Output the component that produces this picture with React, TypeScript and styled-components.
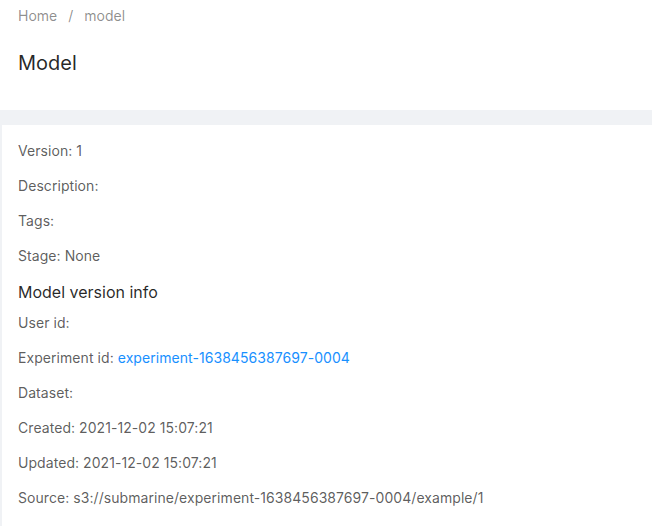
import React from 'react';
import styled, { createGlobalStyle } from 'styled-components';

const GlobalStyle = createGlobalStyle`
  body {
    margin: 0;
    font-family: Inter, "Noto Sans", sans-serif;
    font-size: 14px;
    background: #f0f2f5;
  }
`;

const Page = styled.div`
  display: flex;
  flex-direction: column;
  min-height: 526px;
`;

const Header = styled.div`
  background: #fff;
  padding: 5px 18px 0;
  height: 105px;
`;

const Breadcrumb = styled.div`
  display: flex;
  gap: 8px;
  line-height: 22px;
  color: rgba(0, 0, 0, 0.45);
`;

const Separator = styled.span`
  margin: 0 3px;
`;

const Title = styled.h1`
  margin: 22px 0 0;
  font-size: 20px;
  font-weight: 400;
  line-height: 28px;
  color: rgba(0, 0, 0, 0.85);
`;

const Content = styled.div`
  flex: 1;
  margin: 15px 0 0 2px;
  padding: 15px 16px 0;
  background: #fff;
`;

const Line = styled.p`
  margin: 0 0 14px;
  line-height: 21px;
  letter-spacing: 0.06px;
  color: rgba(0, 0, 0, 0.65);
`;

const Section = styled.h3`
  margin: 0 0 8px;
  font-size: 16px;
  font-weight: 400;
  line-height: 24px;
  color: rgba(0, 0, 0, 0.85);
`;

const Link = styled.a`
  color: #1890ff;
  text-decoration: none;
`;

export default function App() {
  return (
    <Page>
      <GlobalStyle />
      <Header>
        <Breadcrumb>
          <span>Home</span>
          <Separator>/</Separator>
          <span>model</span>
        </Breadcrumb>
        <Title>Model</Title>
      </Header>
      <Content>
        <Line>Version: 1</Line>
        <Line>Description:</Line>
        <Line>Tags:</Line>
        <Line>Stage: None</Line>
        <Section>Model version info</Section>
        <Line>User id:</Line>
        <Line>
          Experiment id: <Link href="#">experiment-1638456387697-0004</Link>
        </Line>
        <Line>Dataset:</Line>
        <Line>Created: 2021-12-02 15:07:21</Line>
        <Line>Updated: 2021-12-02 15:07:21</Line>
        <Line>Source: s3://submarine/experiment-1638456387697-0004/example/1</Line>
      </Content>
    </Page>
  );
}
